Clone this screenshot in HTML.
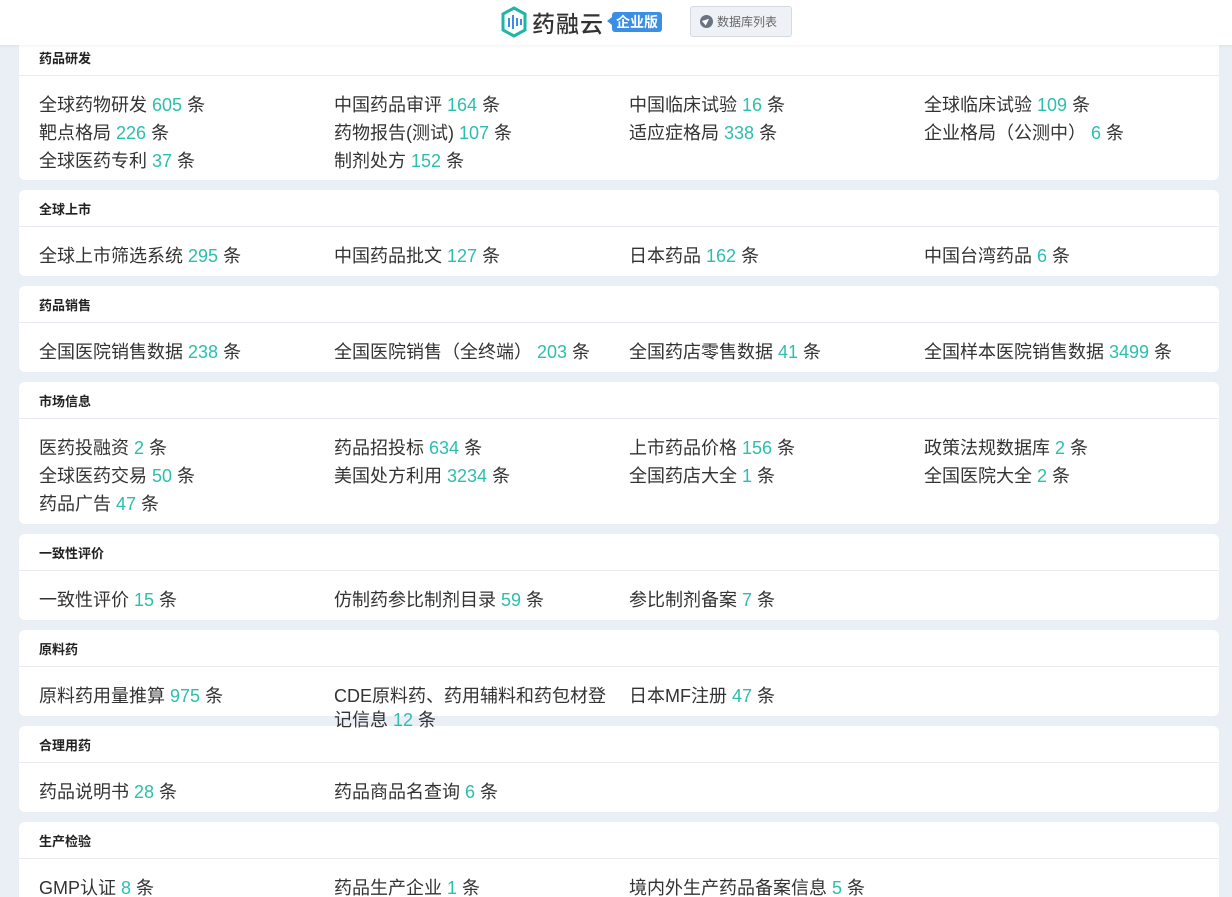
<!DOCTYPE html>
<html><head><meta charset="utf-8"><style>
*{margin:0;padding:0;box-sizing:border-box}
html,body{width:1232px;height:897px;overflow:hidden}
body{background:#eaeef5;font-family:"Liberation Sans","Noto Sans CJK SC",sans-serif;color:#333;position:relative}
.hdr{position:absolute;left:0;top:0;width:1232px;height:45px;background:#fff;z-index:5;box-shadow:0 1px 3px rgba(0,0,0,.06)}
.logo{position:absolute;left:500px;top:6px;height:32px;display:flex;align-items:center}
.logo .t{font-size:23px;color:#333;font-weight:500;margin-left:4px;letter-spacing:1px}
.badge{position:relative;margin-left:8px;background:#3a8ee6;color:#fff;font-size:14px;font-weight:bold;padding:1px 4px;border-radius:3px;line-height:18px}
.badge:before{content:"";position:absolute;left:-5px;top:5px;border-right:5px solid #3a8ee6;border-top:4px solid transparent;border-bottom:4px solid transparent}
.btn{position:absolute;left:690px;top:6px;width:102px;height:31px;border:1px solid #d5dae2;background:#eef1f6;border-radius:3px;font-size:12px;color:#666;display:flex;align-items:center;padding-left:9px}
.btn i{width:13px;height:13px;border-radius:50%;background:#6b7380;margin-right:4px;position:relative}
.btn i:after{content:"";position:absolute;left:3px;top:3px;border-left:7px solid #fff;border-top:3px solid transparent;border-bottom:3px solid transparent;transform:rotate(-40deg)}
.card{position:absolute;left:19px;width:1200px;background:#fff;border-radius:6px}
.card h3{height:37px;line-height:39px;font-size:13px;font-weight:bold;padding-left:20px;border-bottom:1px solid #e8ebef;color:#222}
.rows{display:flex;flex-wrap:wrap;padding:14px 0 7px 20px}
.it{width:295px;height:28px;font-size:18px;line-height:24px;padding-top:3px;padding-right:20px}
.it b{font-weight:normal;color:#2bbfae}
</style></head><body>
<div class="hdr">
<div class="logo">
<svg width="28" height="32" viewBox="0 0 28 32"><path d="M14 2 L25 8 V24 L14 30 L3 24 V8 Z" fill="none" stroke="#1fb6a6" stroke-width="3"/><g stroke="#3a8ee6" stroke-width="2"><line x1="9" y1="12" x2="9" y2="21"/><line x1="13" y1="9" x2="13" y2="23"/><line x1="17" y1="12" x2="17" y2="20"/><line x1="21" y1="13" x2="21" y2="19"/></g></svg>
<span class="t">药融云</span><span class="badge">企业版</span></div>
<div class="btn"><i></i>数据库列表</div>
</div>

<div class="card" style="top:39px;height:141px"><h3>药品研发</h3><div class="rows">
<div class="it">全球药物研发 <b>605</b> 条</div><div class="it">中国药品审评 <b>164</b> 条</div><div class="it">中国临床试验 <b>16</b> 条</div><div class="it">全球临床试验 <b>109</b> 条</div>
<div class="it">靶点格局 <b>226</b> 条</div><div class="it">药物报告(测试) <b>107</b> 条</div><div class="it">适应症格局 <b>338</b> 条</div><div class="it">企业格局（公测中） <b>6</b> 条</div>
<div class="it">全球医药专利 <b>37</b> 条</div><div class="it">制剂处方 <b>152</b> 条</div></div></div>

<div class="card" style="top:190px;height:86px"><h3>全球上市</h3><div class="rows">
<div class="it">全球上市筛选系统 <b>295</b> 条</div><div class="it">中国药品批文 <b>127</b> 条</div><div class="it">日本药品 <b>162</b> 条</div><div class="it">中国台湾药品 <b>6</b> 条</div></div></div>

<div class="card" style="top:286px;height:86px"><h3>药品销售</h3><div class="rows">
<div class="it">全国医院销售数据 <b>238</b> 条</div><div class="it">全国医院销售（全终端） <b>203</b> 条</div><div class="it">全国药店零售数据 <b>41</b> 条</div><div class="it">全国样本医院销售数据 <b>3499</b> 条</div></div></div>

<div class="card" style="top:382px;height:142px"><h3>市场信息</h3><div class="rows">
<div class="it">医药投融资 <b>2</b> 条</div><div class="it">药品招投标 <b>634</b> 条</div><div class="it">上市药品价格 <b>156</b> 条</div><div class="it">政策法规数据库 <b>2</b> 条</div>
<div class="it">全球医药交易 <b>50</b> 条</div><div class="it">美国处方利用 <b>3234</b> 条</div><div class="it">全国药店大全 <b>1</b> 条</div><div class="it">全国医院大全 <b>2</b> 条</div>
<div class="it">药品广告 <b>47</b> 条</div></div></div>

<div class="card" style="top:534px;height:86px"><h3>一致性评价</h3><div class="rows">
<div class="it">一致性评价 <b>15</b> 条</div><div class="it">仿制药参比制剂目录 <b>59</b> 条</div><div class="it">参比制剂备案 <b>7</b> 条</div></div></div>

<div class="card" style="top:630px;height:86px"><h3>原料药</h3><div class="rows">
<div class="it">原料药用量推算 <b>975</b> 条</div><div class="it" style="position:relative;z-index:2">CDE原料药、药用辅料和药包材登记信息 <b>12</b> 条</div><div class="it">日本MF注册 <b>47</b> 条</div></div></div>

<div class="card" style="top:726px;height:86px"><h3>合理用药</h3><div class="rows">
<div class="it">药品说明书 <b>28</b> 条</div><div class="it">药品商品名查询 <b>6</b> 条</div></div></div>

<div class="card" style="top:822px;height:100px"><h3>生产检验</h3><div class="rows">
<div class="it">GMP认证 <b>8</b> 条</div><div class="it">药品生产企业 <b>1</b> 条</div><div class="it">境内外生产药品备案信息 <b>5</b> 条</div></div></div>
</body></html>
